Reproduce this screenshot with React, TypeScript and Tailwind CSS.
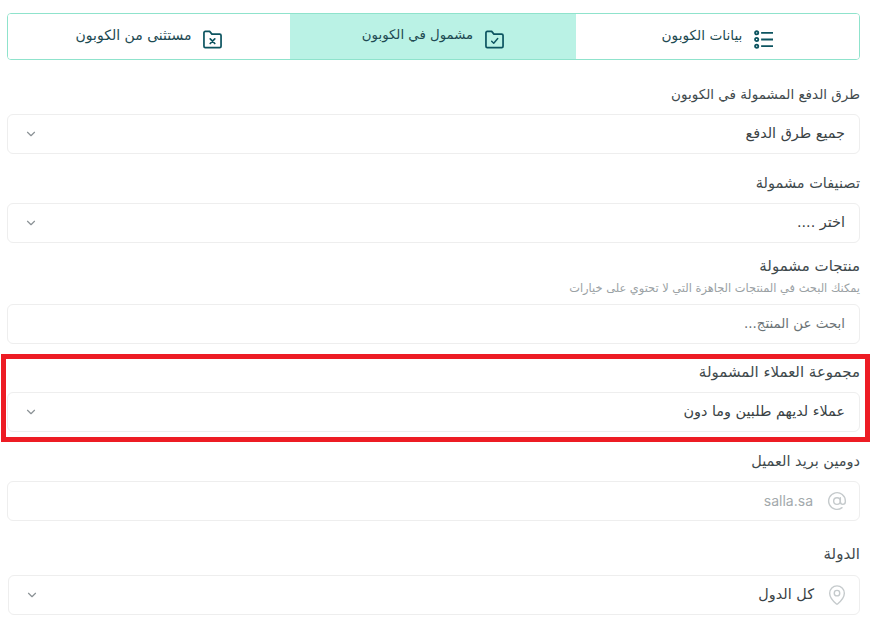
import { ChevronDown, AtSign, MapPin } from "lucide-react";

const font = "[font-family:'DejaVu_Sans',sans-serif]";

function ListIcon() {
    return (
        <svg width="19" height="19" viewBox="0 0 20 20" fill="none" stroke="#0c5460" strokeWidth="1.9" className="mt-[5px]">
            <circle cx="2.8" cy="3" r="1.7" />
            <circle cx="2.8" cy="10" r="1.7" />
            <circle cx="2.8" cy="17" r="1.7" />
            <path d="M7.5 3H20M7.5 10H20M7.5 17H20" />
        </svg>
    );
}

function FolderIcon({ mark }: { mark: "check" | "x" }) {
    return (
        <svg width="19" height="19" viewBox="0 0 20 20" fill="none" stroke="#0c5460" strokeWidth="1.8" strokeLinejoin="round" className="mt-[6px]">
            <path d="M1 3C1 2.2 1.6 1.5 2.4 1.5H7l2.4 2.8h8.2c.8 0 1.4.6 1.4 1.4v11.4c0 .8-.6 1.4-1.4 1.4H2.4c-.8 0-1.4-.6-1.4-1.4z" />
            {mark === "check" ? (
                <path d="M7 11.8l2.2 2.2L13.4 9" strokeWidth="1.5" strokeLinecap="round" />
            ) : (
                <path d="M7.6 9.4l4.8 4.8M12.4 9.4l-4.8 4.8" strokeWidth="1.8" strokeLinecap="round" />
            )}
        </svg>
    );
}

function Tab({ label, icon, active, size = "text-sm" }: { label: string; icon: React.ReactNode; active?: boolean; size?: string }) {
    return (
        <div className={`flex items-center justify-center gap-3 text-[#1d4a52] ${size} ${active ? "bg-[#baf2e5]" : "bg-white"}`}>
            {icon}
            <span className="-mt-[3px]">{label}</span>
        </div>
    );
}

function Label({ children, size = "text-[14.5px]" }: { children: React.ReactNode; size?: string }) {
    return <div className={`h-5 leading-5 text-[#3f4a4d] ${size}`}>{children}</div>;
}

function Box({ children }: { children: React.ReactNode }) {
    return (
        <div className="flex h-10 items-center rounded-md border border-[#eeeeee] bg-white pr-[14px] pl-4 text-[14.4px] text-[#3a4244]">
            {children}
        </div>
    );
}

function Select({ label }: { label: string }) {
    return (
        <Box>
            <span className="flex-1">{label}</span>
            <ChevronDown size={14} strokeWidth={2} className="text-[#8b9296]" />
        </Box>
    );
}

export default function App() {
    return (
        <div dir="rtl" className={`relative h-[630px] w-[877px] overflow-hidden bg-white ${font}`}>
            <div className="mr-[17px] ml-[7px] pt-[13px]">
                <div className="grid h-[47px] grid-cols-[283px_286px_1fr] overflow-hidden rounded border border-[#8fe3cc]">
                    <Tab label="بيانات الكوبون" icon={<ListIcon />} size="text-[13.7px]" />
                    <Tab label="مشمول في الكوبون" icon={<FolderIcon mark="check" />} active size="text-[13.3px]" />
                    <Tab label="مستثنى من الكوبون" icon={<FolderIcon mark="x" />} />
                </div>

                <div className="mt-[24px]">
                    <Label size="text-[13.5px]">طرق الدفع المشمولة في الكوبون</Label>
                    <div className="mt-[10px]">
                        <Select label="جميع طرق الدفع" />
                    </div>
                </div>

                <div className="mt-[19px]">
                    <Label>تصنيفات مشمولة</Label>
                    <div className="mt-[10px]">
                        <Select label="اختر ...." />
                    </div>
                </div>

                <div className="mt-[13px]">
                    <Label size="text-[15px]">منتجات مشمولة</Label>
                    <div className="mt-[3px] h-[18px] text-[11.4px] leading-[18px] text-[#9aa1a4]">
                        يمكنك البحث في المنتجات الجاهزة التي لا تحتوي على خيارات
                    </div>
                    <div className="mt-[7px]">
                        <Box>
                            <span className="text-[13.4px] text-[#6b7376]">ابحث عن المنتج...</span>
                        </Box>
                    </div>
                </div>

                <div className="mt-[18px]">
                    <Label size="text-[15px]">مجموعة العملاء المشمولة</Label>
                    <div className="mt-[10px]">
                        <Select label="عملاء لديهم طلبين وما دون" />
                    </div>
                </div>

                <div className="mt-[19px]">
                    <Label>دومين بريد العميل</Label>
                    <div className="mt-[10px]">
                        <Box>
                            <AtSign size={20} strokeWidth={1.7} className="-mr-[2px] ml-[14px] text-[#c5cacc]" />
                            <span dir="ltr" className="font-['Inter'] text-sm text-[#a3a9ac]">salla.sa</span>
                        </Box>
                    </div>
                </div>

                <div className="mt-[23px]">
                    <Label size="text-[15px]">الدولة</Label>
                    <div className="mt-[11px] ml-px">
                        <Box>
                            <MapPin size={22} strokeWidth={1.5} className="-mr-[3px] ml-[12px] text-[#c5cacc]" />
                            <span className="flex-1">كل الدول</span>
                            <ChevronDown size={14} strokeWidth={2} className="text-[#8b9296]" />
                        </Box>
                    </div>
                </div>
            </div>

            {/* red highlight drawn over the form */}
            <div className="pointer-events-none absolute top-[354px] left-[1px] h-[88px] w-[869px] border-[5px] border-[#ed1c24]" />
        </div>
    );
}
